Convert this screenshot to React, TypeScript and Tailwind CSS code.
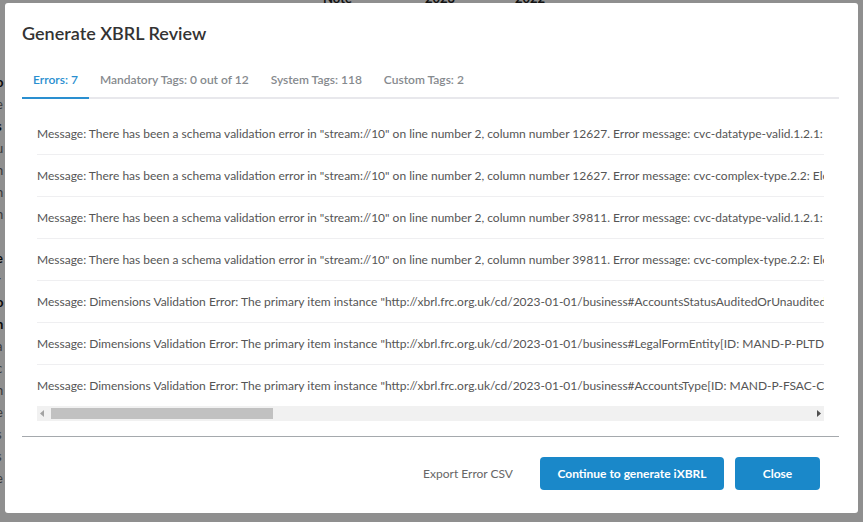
import React from 'react';

type TabItem = {
  label: string;
  active?: boolean;
};

const tabs: TabItem[] = [
  { label: 'Errors: 7', active: true },
  { label: 'Mandatory Tags: 0 out of 12' },
  { label: 'System Tags: 118' },
  { label: 'Custom Tags: 2' },
];

const schemaPrefix =
  'Message: There has been a schema validation error in "stream://10" on line number 2, column number';

const messages: string[] = [
  `${schemaPrefix} 12627. Error message: cvc-datatype-valid.1.2.1: '' is not a valid value for 'decimal'.`,
  `${schemaPrefix} 12627. Error message: cvc-complex-type.2.2: Element 'ix:nonFraction' must have no element [children], and the value must be valid.`,
  `${schemaPrefix} 39811. Error message: cvc-datatype-valid.1.2.1: '' is not a valid value for 'decimal'.`,
  `${schemaPrefix} 39811. Error message: cvc-complex-type.2.2: Element 'ix:nonFraction' must have no element [children], and the value must be valid.`,
  'Message: Dimensions Validation Error: The primary item instance "http://xbrl.frc.org.uk/cd/2023-01-01/business#AccountsStatusAuditedOrUnaudited[ID: MAND-P-ASAU-CJ]" is not dimensionally valid.',
  'Message: Dimensions Validation Error: The primary item instance "http://xbrl.frc.org.uk/cd/2023-01-01/business#LegalFormEntity[ID: MAND-P-PLTD-CJ]" is not dimensionally valid.',
  'Message: Dimensions Validation Error: The primary item instance "http://xbrl.frc.org.uk/cd/2023-01-01/business#AccountsType[ID: MAND-P-FSAC-CJ]" is not dimensionally valid.',
];

// Words of the page behind the dialog; only their first letters peek out
const backgroundLines: { text: string; bold?: boolean }[] = [
  { text: 'o', bold: true },
  { text: 'e' },
  { text: 's', bold: true },
  { text: 'u' },
  { text: 'h' },
  { text: 'n' },
  { text: 'n' },
  { text: '' },
  { text: 'e', bold: true },
  { text: 'r' },
  { text: 'o', bold: true },
  { text: 'n', bold: true },
  { text: 'a' },
  { text: 'c' },
  { text: 'n' },
  { text: 'e' },
  { text: 's' },
  { text: 's' },
  { text: 'e' },
];

const ScrollArrow = ({ direction }: { direction: 'left' | 'right' }) => (
  <svg width="4" height="7" viewBox="0 0 4 7" className="shrink-0">
    {direction === 'left' ? (
      <path d="M4 0 L0 3.5 L4 7 Z" fill="#a3a3a3" />
    ) : (
      <path d="M0 0 L4 3.5 L0 7 Z" fill="#505050" />
    )}
  </svg>
);

const BackgroundPage = () => (
  <div className="h-[522px] overflow-hidden bg-white text-[13px] text-[#222]">
    <div className="-mt-[11px] flex pl-[323px] font-bold">
      <span className="w-[102px]">Note</span>
      <span className="w-[90px]">2023</span>
      <span>2022</span>
    </div>
    <div className="mt-[62px] -ml-[4px] flex flex-col">
      {backgroundLines.map((line, index) => (
        <span
          key={index}
          className={`h-[22px] leading-[22px] ${line.bold ? 'font-bold text-[#111]' : 'text-[#666]'}`}
        >
          {line.text}
        </span>
      ))}
    </div>
  </div>
);

export default function App() {
  return (
    <div
      className="relative h-[522px] w-[863px] overflow-hidden"
      style={{ fontFamily: 'Lato, "Open Sans", sans-serif' }}
    >
      <BackgroundPage />

      {/* Overlay */}
      <div className="absolute inset-0 bg-black/[0.44]" />

      {/* Dialog */}
      <div className="absolute left-[5px] top-[3px] flex h-[510px] w-[853px] flex-col rounded-[3px] bg-white pl-[17px] pr-[19px]">
        <h2 className="mt-[18px] text-[18px] font-semibold leading-[24px] text-[#333]">
          Generate XBRL Review
        </h2>

        {/* Tabs */}
        <div className="mt-[26px] flex border-b-2 border-[#e8e8ec]">
          {tabs.map((tab) => (
            <div
              key={tab.label}
              className={`-mb-[2px] px-[11px] pb-[9px] text-[12px] font-semibold leading-[17px] ${
                tab.active
                  ? 'border-b-2 border-[#2a8fd0] text-[#2a8fd0]'
                  : 'border-b-2 border-transparent text-[#868a8e]'
              }`}
            >
              {tab.label}
            </div>
          ))}
        </div>

        {/* Error list */}
        <div className="mx-[15px] mt-[14px] flex flex-col overflow-hidden">
          {messages.map((message, index) => (
            <div
              key={index}
              className={`flex h-[42px] items-center whitespace-nowrap text-[12px] text-[#555] ${
                index < messages.length - 1 ? 'border-b border-[#efeff1]' : ''
              }`}
            >
              {message}
            </div>
          ))}

          {/* Horizontal scrollbar */}
          <div className="-mt-[1px] flex h-[15px] items-center bg-[#f1f1f1] px-[3px]">
            <ScrollArrow direction="left" />
            <div className="ml-[7px] h-[11px] w-[222px] bg-[#c1c1c1]" />
            <div className="flex-1" />
            <ScrollArrow direction="right" />
          </div>
        </div>

        {/* Footer */}
        <div className="mt-[15px] border-t border-[#a5a9ad]" />
        <div className="mt-[20px] flex items-center justify-end pr-[19px]">
          <button className="mr-[27px] text-[12px] text-[#666]">
            Export Error CSV
          </button>
          <button className="h-[33px] w-[184px] rounded-[4px] bg-[#1a88c9] text-[12px] font-bold text-white">
            Continue to generate iXBRL
          </button>
          <button className="ml-[11px] h-[33px] w-[85px] rounded-[4px] bg-[#1a88c9] text-[12px] font-bold text-white">
            Close
          </button>
        </div>
      </div>
    </div>
  );
}
